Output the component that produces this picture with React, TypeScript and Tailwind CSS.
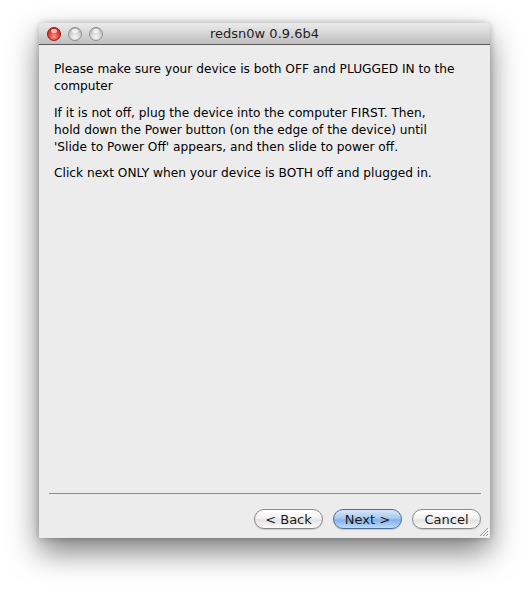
import React from "react";

const FONT = "font-['Lucida_Grande','DejaVu_Sans',sans-serif]";

function TrafficLight({ color }: { color: "red" | "grey" }) {
  const fill =
    color === "red"
      ? "bg-[radial-gradient(circle_at_50%_70%,#ff9b96_0%,#e8403a_45%,#b01c16_100%)] border-[#8a1a15]"
      : "bg-[radial-gradient(circle_at_50%_75%,#f4f4f4_0%,#d2d2d2_50%,#a9a9a9_100%)] border-[#8e8e8e]";
  return (
    <span className={`relative block h-[14px] w-[14px] rounded-full border ${fill}`}>
      <span className="absolute left-[3px] top-[1px] h-[4px] w-[6px] rounded-full bg-white/70" />
    </span>
  );
}

function AquaButton({ label, primary }: { label: string; primary?: boolean }) {
  return (
    <button
      type="button"
      className={`flex h-[20px] w-[69px] items-center justify-center rounded-full border text-[13px] leading-none text-[#1a1a1a] shadow-[0_1px_1px_rgba(0,0,0,0.15)] ${
        primary
          ? "border-[#4f6f9a] bg-[linear-gradient(to_bottom,#d6e6f8_0%,#a9cbef_45%,#82b1e8_55%,#bcdcfb_100%)]"
          : "border-[#8a8a8a] bg-[linear-gradient(to_bottom,#ffffff_0%,#f3f3f3_45%,#e2e2e2_55%,#fbfbfb_100%)]"
      }`}
    >
      {label}
    </button>
  );
}

export default function App() {
  return (
    <div className={`h-[592px] w-[530px] overflow-hidden bg-white pl-[39px] pt-[23px] ${FONT}`}>
      <div className="relative flex h-[515px] w-[451px] flex-col rounded-t-[5px] shadow-[0_14px_30px_rgba(0,0,0,0.5),0_0_6px_rgba(0,0,0,0.25)]">
        {/* Title bar */}
        <div className="relative flex h-[22px] items-center rounded-t-[5px] border-b border-[#5a5a5a] bg-[linear-gradient(to_bottom,#ebebeb_0%,#d6d6d6_50%,#bdbdbd_100%)] px-[8px]">
          <div className="flex items-center gap-[7px]">
            <TrafficLight color="red" />
            <TrafficLight color="grey" />
            <TrafficLight color="grey" />
          </div>
          <div className="absolute inset-x-0 text-center text-[13px] leading-none text-[#1e1e1e]">
            redsn0w 0.9.6b4
          </div>
        </div>

        {/* Body */}
        <div className="flex flex-1 flex-col bg-[#ececec]">
          <div className="flex-1 px-[15px] pt-[16px] text-[12.2px] leading-[17px] text-black">
            <p>
              Please make sure your device is both OFF and PLUGGED IN to the
              <br />
              computer
            </p>
            <p className="mt-[10px]">
              If it is not off, plug the device into the computer FIRST. Then,
              <br />
              hold down the Power button (on the edge of the device) until
              <br />
              'Slide to Power Off' appears, and then slide to power off.
            </p>
            <p className="mt-[9px]">Click next ONLY when your device is BOTH off and plugged in.</p>
          </div>

          <div className="ml-[10px] mr-[9px] border-t border-[#8c8c8c]" />

          <div className="flex justify-end gap-[10px] pb-[9px] pr-[9px] pt-[15px]">
            <AquaButton label="< Back" />
            <AquaButton label="Next >" primary />
            <AquaButton label="Cancel" />
          </div>
        </div>

        {/* Resize grip */}
        <svg className="absolute bottom-[1px] right-[1px]" width="11" height="11" viewBox="0 0 11 11">
          <path d="M10 2 L2 10 M10 5 L5 10 M10 8 L8 10" stroke="#9a9a9a" strokeWidth="1" />
          <path d="M11 3 L3 11 M11 6 L6 11 M11 9 L9 11" stroke="#ffffff" strokeWidth="1" />
        </svg>
      </div>
    </div>
  );
}
